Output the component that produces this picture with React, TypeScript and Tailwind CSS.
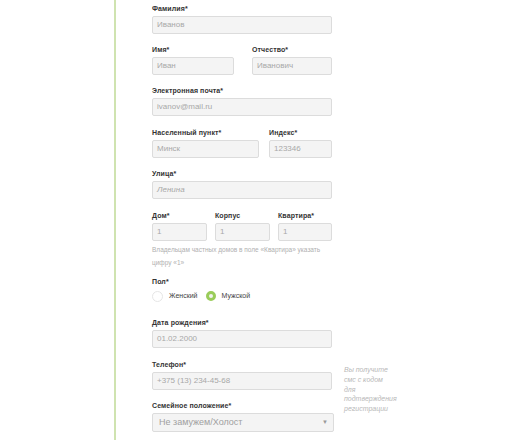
import React from "react";

const font = { fontFamily: '"Liberation Sans", Arial, sans-serif' };

function Label({ children }: { children: React.ReactNode }) {
  return (
    <div className="text-[7px] leading-[8px] text-[#333] font-bold tracking-[0.1px] h-[8px]">
      {children}
    </div>
  );
}

function Input({ value, w, italic }: { value: string; w: string; italic?: boolean }) {
  return (
    <div
      className={`${w} h-[18px] rounded-[2px] border border-[#dcdcdc] bg-[#f4f4f4] flex items-center pl-[4px] text-[8px] text-[#a8a8a8] ${italic ? "italic" : ""}`}
    >
      {value}
    </div>
  );
}

export default function App() {
  return (
    <div className="w-[525px] h-[440px] bg-white overflow-hidden flex" style={font}>
      <div className="w-[114px] shrink-0" />
      <div className="w-[2px] shrink-0 bg-[#cfe3b0]" />
      <div className="flex-1 pl-[36px] pt-[5px] flex flex-col">
        <div className="flex flex-col gap-[3px]">
          <Label>Фамилия*</Label>
          <Input value="Иванов" w="w-[180px]" />
        </div>

        <div className="flex gap-[18px] mt-[12px]">
          <div className="flex flex-col gap-[3px]">
            <Label>Имя*</Label>
            <Input value="Иван" w="w-[82px]" />
          </div>
          <div className="flex flex-col gap-[3px]">
            <Label>Отчество*</Label>
            <Input value="Иванович" w="w-[80px]" />
          </div>
        </div>

        <div className="flex flex-col gap-[3px] mt-[12px]">
          <Label>Электронная почта*</Label>
          <Input value="ivanov@mail.ru" w="w-[180px]" />
        </div>

        <div className="flex gap-[10px] mt-[13px]">
          <div className="flex flex-col gap-[3px]">
            <Label>Населенный пункт*</Label>
            <Input value="Минск" w="w-[107px]" />
          </div>
          <div className="flex flex-col gap-[3px]">
            <Label>Индекс*</Label>
            <Input value="123346" w="w-[63px]" />
          </div>
        </div>

        <div className="flex flex-col gap-[3px] mt-[12px]">
          <Label>Улица*</Label>
          <Input value="Ленина" w="w-[180px]" italic />
        </div>

        <div className="flex gap-[8px] mt-[13px]">
          <div className="flex flex-col gap-[3px]">
            <Label>Дом*</Label>
            <Input value="1" w="w-[55px]" />
          </div>
          <div className="flex flex-col gap-[3px]">
            <Label>Корпус</Label>
            <Input value="1" w="w-[55px]" />
          </div>
          <div className="flex flex-col gap-[3px]">
            <Label>Квартира*</Label>
            <Input value="1" w="w-[54px]" />
          </div>
        </div>

        <div className="mt-[2px] w-[182px] text-[6.5px] leading-[13px] text-[#b0b0b0]">
          Владельцам частных домов в поле «Квартира» указать цифру «1»
        </div>

        <div className="mt-[9px] flex flex-col">
          <Label>Пол*</Label>
          <div className="flex items-center mt-[3px] h-[14px]">
            <div className="w-[11px] h-[11px] rounded-full border border-[#e6e6e6] bg-white" />
            <span className="ml-[6px] text-[7px] text-[#444]">Женский</span>
            <div className="ml-[8px] w-[10px] h-[10px] rounded-full border-[3px] border-[#9acc5a] bg-[#f2f2f2]" />
            <span className="ml-[6px] text-[7px] text-[#444]">Мужской</span>
          </div>
        </div>

        <div className="flex flex-col gap-[3px] mt-[16px]">
          <Label>Дата рождения*</Label>
          <Input value="01.02.2000" w="w-[180px]" />
        </div>

        <div className="flex mt-[13px]">
          <div className="flex flex-col">
            <div className="flex flex-col gap-[3px]">
              <Label>Телефон*</Label>
              <Input value="+375 (13) 234-45-68" w="w-[180px]" />
            </div>
            <div className="flex flex-col gap-[3px] mt-[12px]">
              <Label>Семейное положение*</Label>
              <div className="w-[182px] h-[19px] rounded-[2px] border border-[#dcdcdc] bg-[#f4f4f4] flex items-center justify-between pl-[6px] pr-[5px] text-[9px] text-[#a0a0a0]">
                <span>Не замужем/Холост</span>
                <span className="text-[6px] text-[#999]">▼</span>
              </div>
            </div>
          </div>
          <div className="ml-[10px] mt-[4px] text-[7px] leading-[9.8px] italic text-[#b8b8b8]">
            Вы получите
            <br />
            смс с кодом
            <br />
            для
            <br />
            подтверждения
            <br />
            регистрации
          </div>
        </div>
      </div>
    </div>
  );
}
